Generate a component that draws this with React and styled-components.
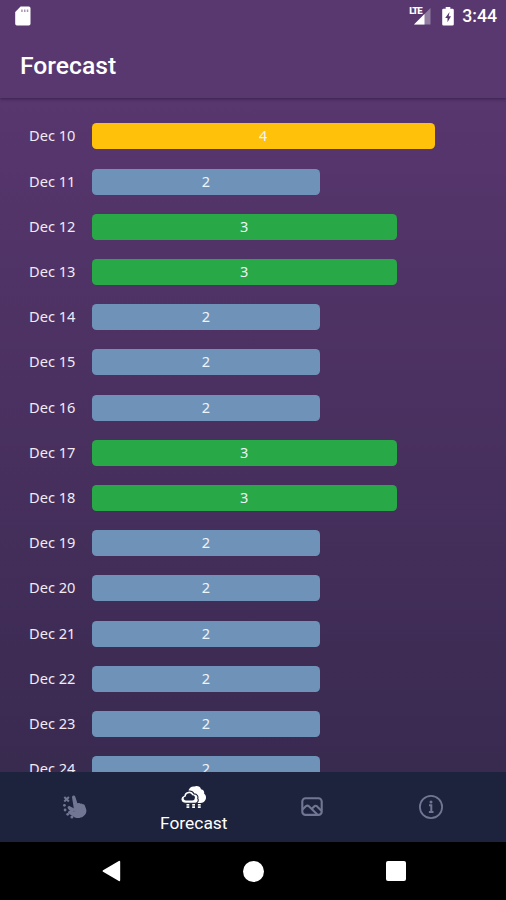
import React from 'react';
import styled, { createGlobalStyle } from 'styled-components'

const forecast = [
  { day: 'Dec 10', kp: 4 },
  { day: 'Dec 11', kp: 2 },
  { day: 'Dec 12', kp: 3 },
  { day: 'Dec 13', kp: 3 },
  { day: 'Dec 14', kp: 2 },
  { day: 'Dec 15', kp: 2 },
  { day: 'Dec 16', kp: 2 },
  { day: 'Dec 17', kp: 3 },
  { day: 'Dec 18', kp: 3 },
  { day: 'Dec 19', kp: 2 },
  { day: 'Dec 20', kp: 2 },
  { day: 'Dec 21', kp: 2 },
  { day: 'Dec 22', kp: 2 },
  { day: 'Dec 23', kp: 2 },
  { day: 'Dec 24', kp: 2 },
]

const levels = {
  2: { color: '#6f93b8', width: '60%' },
  3: { color: '#28a846', width: '80%' },
  4: { color: '#ffc10a', width: '90%' },
}

const SdCardIcon = () => (
  <svg width="16" height="20" viewBox="0 0 16 20">
    <path d="M5.6 .5h8.2a1.7 1.7 0 0 1 1.7 1.7v15.6a1.7 1.7 0 0 1-1.7 1.7H1.900a1.700 1.700 0 0 1-1.700-1.700V6z" fill="#fff"/>
    <path d="M6.200 3.400h1.500v2.600H6.200zM9 3.400h1.500v2.600H9zM11.800 3.400h1.500v2.600h-1.500z" fill="#a895b5"/>
  </svg>
)

const SignalIcon = () => (
  <svg width="18" height="17" viewBox="0 0 18 17">
    <path d="M17.500 0v16.500H1z" fill="#fff" opacity=".35"/>
    <path d="M11.500 6v10.500H1z" fill="#fff"/>
  </svg>
)

const BatteryIcon = () => (
  <svg width="12" height="19" viewBox="0 0 12 19">
    <path d="M3.700 0h4.600v1.800h2.200A1.300 1.300 0 0 1 11.800 3v14.200a1.300 1.300 0 0 1-1.300 1.300h-9A1.300 1.300 0 0 1 .2 17.200V3a1.300 1.300 0 0 1 1.300-1.200h2.200z" fill="#fff"/>
    <path d="M7.500 5L3.200 11h2.300v4.300L9 9.300H6.700z" fill="#57376e"/>
  </svg>
)

const TapIcon = () => (
  <svg width="26" height="26" viewBox="0 0 26 26" fill="currentColor">
    <path d="M10 3.200a1.700 1.700 0 0 1 3.300-.5l2.100 6.600 1.100-.3c.9-.2 1.600.1 2 .7.900-.3 1.700 0 2.200.6.900-.2 1.700.3 2.100 1.200l1.300 3.400c.7 2.200.2 4.200-1.100 5.800l-1.900 1.800c-2.400 1.600-5.700 1.900-8.200.9l-6-3.600c-1-.6-1.100-1.700-.6-2.300.6-.7 1.500-.9 2.500-.6l3.500.7z"/>
    <path d="M8.300 12.400c-1.500-.9-3.100.1-2.600 1.600.3 1 2.700 3.500 4.400 4.500l4-3z"/>
    <path d="M2.300 3l4.600 4.500M6.900 3L2.300 7.500" stroke="currentColor" strokeWidth="2"/>
    <circle cx="2.400" cy="11.300" r="1.350"/>
    <circle cx="3.100" cy="16" r="1.400"/>
    <circle cx="5.700" cy="20.300" r="1.400"/>
    <circle cx="9.900" cy="22.900" r="1.500"/>
  </svg>
)

const CloudIcon = () => (
  <svg width="28" height="26" viewBox="0 0 28 26">
    <path d="M8.500 5.200C9.600 2.500 11.800 1.100 14.300 1.600c2.400-1.300 6.200-.2 6.700 2.700 2.400.4 3.600 2.300 3.200 4.400 2.100 1.500 2.300 4.400 1.200 6.400-1 1.900-2.700 2.900-4.900 2.900H13z" fill="#fff"/>
    <path d="M5.500 18.200c-5.500 0-6-6.600-1.700-7.700.5-4.900 8-6.200 10.300-1.600 3.200 0 4.300 2.600 3.600 4.500 1.300 1.800.1 4.800-2.200 4.800z" fill="#fff" stroke="#1d223d" strokeWidth="1.100"/>
    <path d="M6 15.400c-3.100-.1-3-3.600-.2-3.900.2-3.600 5-4.400 6.300-1.300 2.400-.2 3.300 1.400 2.700 3-.2 1.500-1.100 2.200-2.500 2.200z" fill="#1d223d"/>
    <path d="M6.500 18.900h2.800v4.200H6.500zM12.200 18.900H15v4.200h-2.800zM17.900 18.900h2.800v4.200h-2.800z" fill="#fff"/>
    <path d="M5.500 20.900h16" stroke="#1d223d" strokeWidth=".6"/>
  </svg>
)

const GalleryIcon = () => (
  <svg width="22" height="20" viewBox="0 0 22 20" fill="none" stroke="currentColor" strokeWidth="2.100">
    <rect x="1.300" y="1.300" width="19.400" height="16.600" rx="3.200"/>
    <path d="M1.500 12.500l3.300-3.200c1-.9 2.200-.9 3.100 0l8.400 8.300M11.300 11.300l1.900-1.900c.9-.8 2-.8 2.900 0l4.300 4.300"/>
  </svg>
)

const InfoIcon = () => (
  <svg width="26" height="26" viewBox="0 0 26 26" fill="none" stroke="currentColor">
    <circle cx="13" cy="13" r="11.100" strokeWidth="1.800"/>
    <path d="M11 11.300h2.300v6.700M10.900 18h4.600" strokeWidth="2"/>
    <circle cx="13" cy="8" r="1.500" fill="currentColor" stroke="none"/>
  </svg>
)

const App = () => {
  return (
    <Screen>
      <GlobalStyle />
      <Header>
        <StatusBar>
          <SdCardIcon />
          <StatusRight>
            <Signal>
              <SignalIcon />
              <Lte>LTE</Lte>
            </Signal>
            <BatteryIcon />
            <Clock>3:44</Clock>
          </StatusRight>
        </StatusBar>
        <Title>Forecast</Title>
      </Header>
      <List>
        {forecast.map(({ day, kp }) => (
          <Row key={day}>
            <Day>{day}</Day>
            <Track>
              <Bar $color={levels[kp].color} $width={levels[kp].width}>{kp}</Bar>
            </Track>
          </Row>
        ))}
      </List>
      <TabBar>
        <Tab><TapIcon /></Tab>
        <Tab $active>
          <CloudIcon />
          <TabLabel>Forecast</TabLabel>
        </Tab>
        <Tab><GalleryIcon /></Tab>
        <Tab><InfoIcon /></Tab>
      </TabBar>
      <SystemNav>
        <svg width="20" height="22" viewBox="0 0 20 22">
          <path d="M18.300 1.700v18.600L2.500 11z" fill="#fff" stroke="#fff" strokeWidth="1.800" strokeLinejoin="round"/>
        </svg>
        <HomeButton />
        <RecentsButton />
      </SystemNav>
    </Screen>
  );
};

const GlobalStyle = createGlobalStyle`
  * {
    box-sizing: border-box;
  }
  body {
    margin: 0;
    background: #000;
  }
  svg {
    display: block;
    flex-shrink: 0;
  }
`

const Screen = styled.div`
  width: 506px;
  height: 900px;
  display: flex;
  flex-direction: column;
  overflow: hidden;
  background: linear-gradient(#58366e 0, #58366e 100px, #392a50 772px);
  color: #fff;
  font-family: Roboto, sans-serif;
`

const Header = styled.header`
  height: 98px;
  flex-shrink: 0;
  background: #58386f;
  box-shadow: 0 1px 3px rgba(30, 10, 50, .5);
`

const StatusBar = styled.div`
  height: 32px;
  padding: 0 9px 0 15px;
  display: flex;
  align-items: center;
  justify-content: space-between;
`

const StatusRight = styled.div`
  display: flex;
  align-items: center;
`

const Signal = styled.div`
  position: relative;
  margin-right: 11px;
`

const Lte = styled.span`
  position: absolute;
  left: -4px;
  top: -2px;
  width: 14px;
  font-size: 9.500px;
  line-height: 9px;
  font-weight: 900;
  letter-spacing: -1px;
  background: #58386f;
`

const Clock = styled.span`
  margin-left: 8px;
  font-size: 17.700px;
  font-weight: 500;
  line-height: 32px;
`

const Title = styled.h1`
  margin: 0;
  padding-left: 20px;
  font-size: 24.700px;
  line-height: 68px;
  font-weight: 500;
`

const List = styled.main`
  flex: 1;
  min-height: 0;
  padding: 15.900px 33px 0 29px;
  overflow: hidden;
`

const Row = styled.div`
  height: 45.200px;
  display: flex;
  align-items: center;
`

const Day = styled.span`
  width: 62.500px;
  flex-shrink: 0;
  font-family: 'Noto Sans', sans-serif;
  font-size: 14.600px;
  line-height: 20px;
  padding-bottom: 2px;
  color: #f1ebf5;
`

const Track = styled.div`
  flex: 1;
`

const Bar = styled.div`
  width: ${props => props.$width};
  height: 26px;
  border-radius: 4.500px;
  background: ${props => props.$color};
  font-family: 'Noto Sans', sans-serif;
  font-size: 14.500px;
  line-height: 25px;
  text-align: center;
  color: #eef4fa;
`

const TabBar = styled.nav`
  height: 70px;
  flex-shrink: 0;
  padding: 0 16px;
  display: grid;
  grid-template-columns: repeat(4, 1fr);
  background: #1d223d;
`

const Tab = styled.a`
  display: flex;
  flex-direction: column;
  align-items: center;
  justify-content: ${props => props.$active ? 'flex-start' : 'center'};
  padding-top: ${props => props.$active ? '13px' : '0'};
  color: ${props => props.$active ? '#fff' : '#717792'};
`

const TabLabel = styled.span`
  margin-top: 2px;
  font-size: 17.400px;
  line-height: 20px;
`

const SystemNav = styled.div`
  height: 58px;
  flex-shrink: 0;
  padding: 0 100px 0 101px;
  display: flex;
  align-items: center;
  justify-content: space-between;
  background: #000;
`

const HomeButton = styled.div`
  width: 21px;
  height: 21px;
  border-radius: 50%;
  background: #fff;
`

const RecentsButton = styled.div`
  width: 20px;
  height: 20px;
  border-radius: 2px;
  background: #fff;
`

export default App
